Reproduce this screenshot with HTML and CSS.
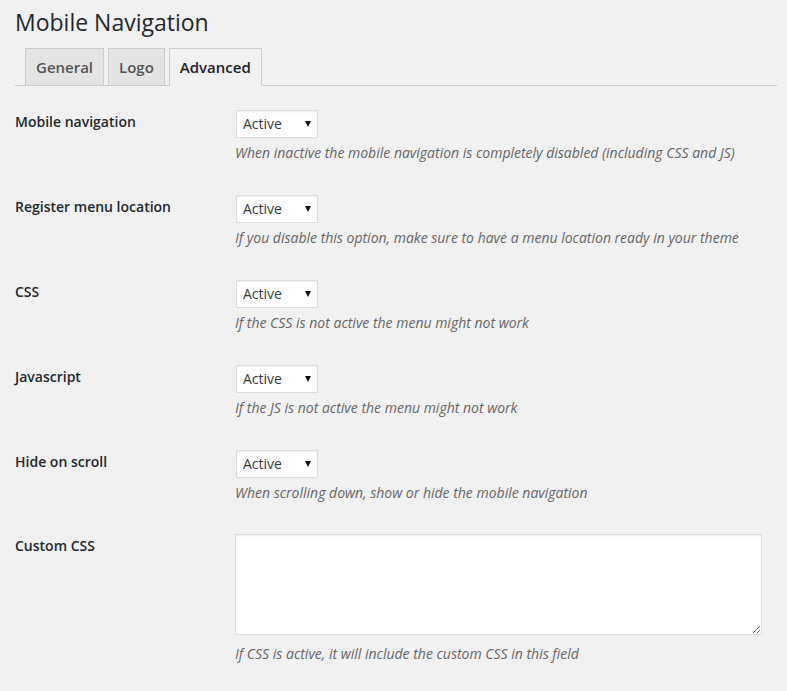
FILE: index.html
```html
<!DOCTYPE html>
<html lang="en">
<head>
<meta charset="utf-8">
<title>Mobile Navigation</title>
<link rel="stylesheet" href="styles.css">
</head>
<body>
<div class="wrap">
  <h1 class="page-title">Mobile Navigation</h1>
  <nav class="tabs">
    <a class="tab">General</a>
    <a class="tab">Logo</a>
    <a class="tab tab-active">Advanced</a>
  </nav>
  <div class="form-table">
    <div class="row">
      <div class="label">Mobile navigation</div>
      <div class="field">
        <span class="select-wrap"><select class="select"><option>Active</option><option>Inactive</option></select></span>
        <p class="description">When inactive the mobile navigation is completely disabled (including CSS and JS)</p>
      </div>
    </div>
    <div class="row">
      <div class="label">Register menu location</div>
      <div class="field">
        <span class="select-wrap"><select class="select"><option>Active</option><option>Inactive</option></select></span>
        <p class="description">If you disable this option, make sure to have a menu location ready in your theme</p>
      </div>
    </div>
    <div class="row">
      <div class="label">CSS</div>
      <div class="field">
        <span class="select-wrap"><select class="select"><option>Active</option><option>Inactive</option></select></span>
        <p class="description">If the CSS is not active the menu might not work</p>
      </div>
    </div>
    <div class="row">
      <div class="label">Javascript</div>
      <div class="field">
        <span class="select-wrap"><select class="select"><option>Active</option><option>Inactive</option></select></span>
        <p class="description">If the JS is not active the menu might not work</p>
      </div>
    </div>
    <div class="row">
      <div class="label">Hide on scroll</div>
      <div class="field">
        <span class="select-wrap"><select class="select"><option>Active</option><option>Inactive</option></select></span>
        <p class="description">When scrolling down, show or hide the mobile navigation</p>
      </div>
    </div>
    <div class="row">
      <div class="label label-textarea">Custom CSS</div>
      <div class="field field-textarea">
        <textarea class="textarea"></textarea>
        <p class="description description-after-textarea">If CSS is active, it will include the custom CSS in this field</p>
      </div>
    </div>
  </div>
</div>
</body>
</html>
```
FILE: styles.css
```css
html, body {
  margin: 0;
  padding: 0;
  background: #f1f1f1;
}

body {
  font-family: "Open Sans", "Liberation Sans", sans-serif;
  color: #444;
  font-size: 13px;
}

.wrap {
  padding: 0 10px 0 15px;
}

.page-title {
  margin: 0;
  padding-top: 8px;
  font-size: 23px;
  line-height: 29px;
  font-weight: 400;
  color: #23282d;
}

.tabs {
  display: flex;
  align-items: flex-end;
  gap: 4px;
  margin-top: 11px;
  padding-left: 10px;
  border-bottom: 1px solid #ccc;
}

.tab {
  display: block;
  padding: 6px 10px;
  border: 1px solid #ccc;
  border-bottom: none;
  background: #e4e4e4;
  color: #555;
  font-size: 15px;
  line-height: 24px;
  font-weight: 600;
  text-decoration: none;
}

.tab-active {
  background: #f1f1f1;
  color: #1d2327;
  border-bottom: 1px solid #f1f1f1;
  margin-bottom: -1px;
}

.form-table {
  margin-top: 9px;
}

.row {
  display: grid;
  grid-template-columns: 210px 1fr;
}

.label {
  padding-top: 18px;
  font-size: 14px;
  line-height: 18px;
  font-weight: 600;
  color: #23282d;
}

.label-textarea {
  padding-top: 17px;
}

.field {
  padding: 15px 10px 17px 10px;
}

.field-textarea {
  padding-top: 14px;
}

.select-wrap {
  position: relative;
  display: block;
  width: 82px;
  height: 28px;
  margin-left: 1px;
}

.select-wrap::after {
  content: "";
  position: absolute;
  top: 11px;
  right: 7px;
  width: 0;
  height: 0;
  border-left: 3.5px solid transparent;
  border-right: 3.5px solid transparent;
  border-top: 6px solid #111;
  pointer-events: none;
}

.select {
  -webkit-appearance: none;
  appearance: none;
  display: block;
  box-sizing: border-box;
  width: 82px;
  height: 28px;
  margin: 0;
  padding: 0 20px 0 6px;
  border: 1px solid #ddd;
  border-radius: 0;
  background: #fff;
  box-shadow: inset 0 1px 2px rgba(0, 0, 0, 0.07);
  font-family: "Open Sans", "Liberation Sans", sans-serif;
  font-size: 14px;
  line-height: 26px;
  color: #32373c;
}

.description {
  margin: 5px 0 0 0;
  font-size: 14px;
  line-height: 20px;
  font-style: italic;
  color: #666;
}

.textarea {
  display: block;
  box-sizing: border-box;
  width: 99%;
  height: 101px;
  margin: 0;
  padding: 2px 6px;
  border: 1px solid #ddd;
  border-radius: 0;
  background: #fff;
  box-shadow: inset 0 1px 2px rgba(0, 0, 0, 0.07);
  font-family: "Open Sans", "Liberation Sans", sans-serif;
  font-size: 14px;
}

.description-after-textarea {
  margin-top: 9px;
}
```
